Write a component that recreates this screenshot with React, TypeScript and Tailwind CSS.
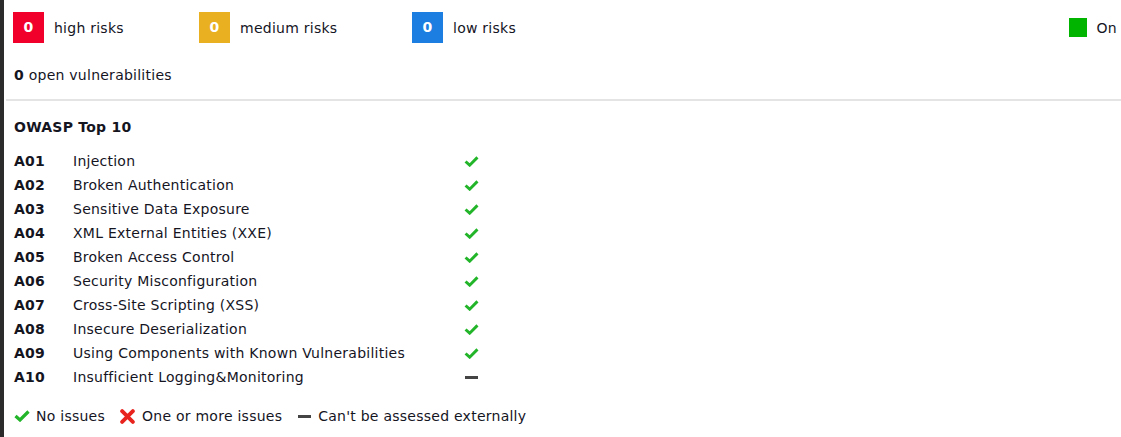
import React from "react";

const rows: [string, string, "ok" | "na"][] = [
  ["A01", "Injection", "ok"],
  ["A02", "Broken Authentication", "ok"],
  ["A03", "Sensitive Data Exposure", "ok"],
  ["A04", "XML External Entities (XXE)", "ok"],
  ["A05", "Broken Access Control", "ok"],
  ["A06", "Security Misconfiguration", "ok"],
  ["A07", "Cross-Site Scripting (XSS)", "ok"],
  ["A08", "Insecure Deserialization", "ok"],
  ["A09", "Using Components with Known Vulnerabilities", "ok"],
  ["A10", "Insufficient Logging&Monitoring", "na"],
];

function Check({ className = "" }: { className?: string }) {
  return (
    <svg viewBox="0 0 16 12" className={className} fill="none">
      <path d="M1.5 6 L6 10 L14.5 1.5" stroke="#22b52a" strokeWidth="3.2" strokeLinejoin="miter" />
    </svg>
  );
}

function Cross() {
  return (
    <svg viewBox="0 0 14 14" className="w-[15px] h-[15px]" fill="none">
      <path d="M2 2 L12 12 M12 2 L2 12" stroke="#e8231d" strokeWidth="3.6" strokeLinecap="round" />
    </svg>
  );
}

function Dash() {
  return <span className="inline-block w-[13px] h-[3px] bg-[#444]" />;
}

function Badge({ color, label, width }: { color: string; label: string; width: string }) {
  return (
    <div className={`flex items-center ${width}`}>
      <div className={`w-[31px] h-[31px] ${color} flex items-center justify-center text-white font-bold text-[14px]`}>0</div>
      <span className="ml-[10px] mt-[2px]">{label}</span>
    </div>
  );
}

export default function App() {
  return (
    <div className="w-[1121px] h-[437px] bg-[#2b2b2b] flex overflow-hidden" style={{ fontFamily: "'DejaVu Sans', Verdana, sans-serif" }}>
      <div className="ml-[4px] flex-1 bg-white text-[14px] tracking-[0.25px] text-[#15151f] flex flex-col">
        <div className="flex items-center pt-[12px] pl-[9px] pr-[4px] h-[43px]">
          <Badge color="bg-[#f2002c]" label="high risks" width="w-[186px]" />
          <Badge color="bg-[#e9b022]" label="medium risks" width="w-[213px]" />
          <Badge color="bg-[#1b7ee0]" label="low risks" width="w-[200px]" />
          <div className="ml-auto flex items-center">
            <span className="w-[18px] h-[19px] bg-[#00b400]" />
            <span className="ml-[10px] mt-[2px]">On</span>
          </div>
        </div>
        <div className="mt-[20px] pl-[10px] leading-[24px]">
          <b>0</b> open vulnerabilities
        </div>
        <div className="mt-[12px] ml-[2px] h-[2px] bg-[#e4e4e4]" />
        <div className="mt-[14px] pl-[10px] leading-[24px] font-bold">OWASP Top 10</div>
        <div className="mt-[10px] pl-[10px]">
          {rows.map(([code, name, st]) => (
            <div key={code} className="flex items-center h-[24px]">
              <span className="w-[59px] font-bold">{code}</span>
              <span className="w-[390px]">{name}</span>
              <span className="w-[16px] flex justify-center">
                {st === "ok" ? <Check className="w-[15px] h-[11px]" /> : <Dash />}
              </span>
            </div>
          ))}
        </div>
        <div className="mt-[15px] pl-[10px] flex items-center h-[24px]">
          <Check className="w-[16px] h-[12px]" />
          <span className="ml-[6px]">No issues</span>
          <span className="ml-[15px] flex items-center"><Cross /></span>
          <span className="ml-[7px]">One or more issues</span>
          <span className="ml-[16px] flex items-center"><Dash /></span>
          <span className="ml-[7px]">Can't be assessed externally</span>
        </div>
      </div>
    </div>
  );
}
